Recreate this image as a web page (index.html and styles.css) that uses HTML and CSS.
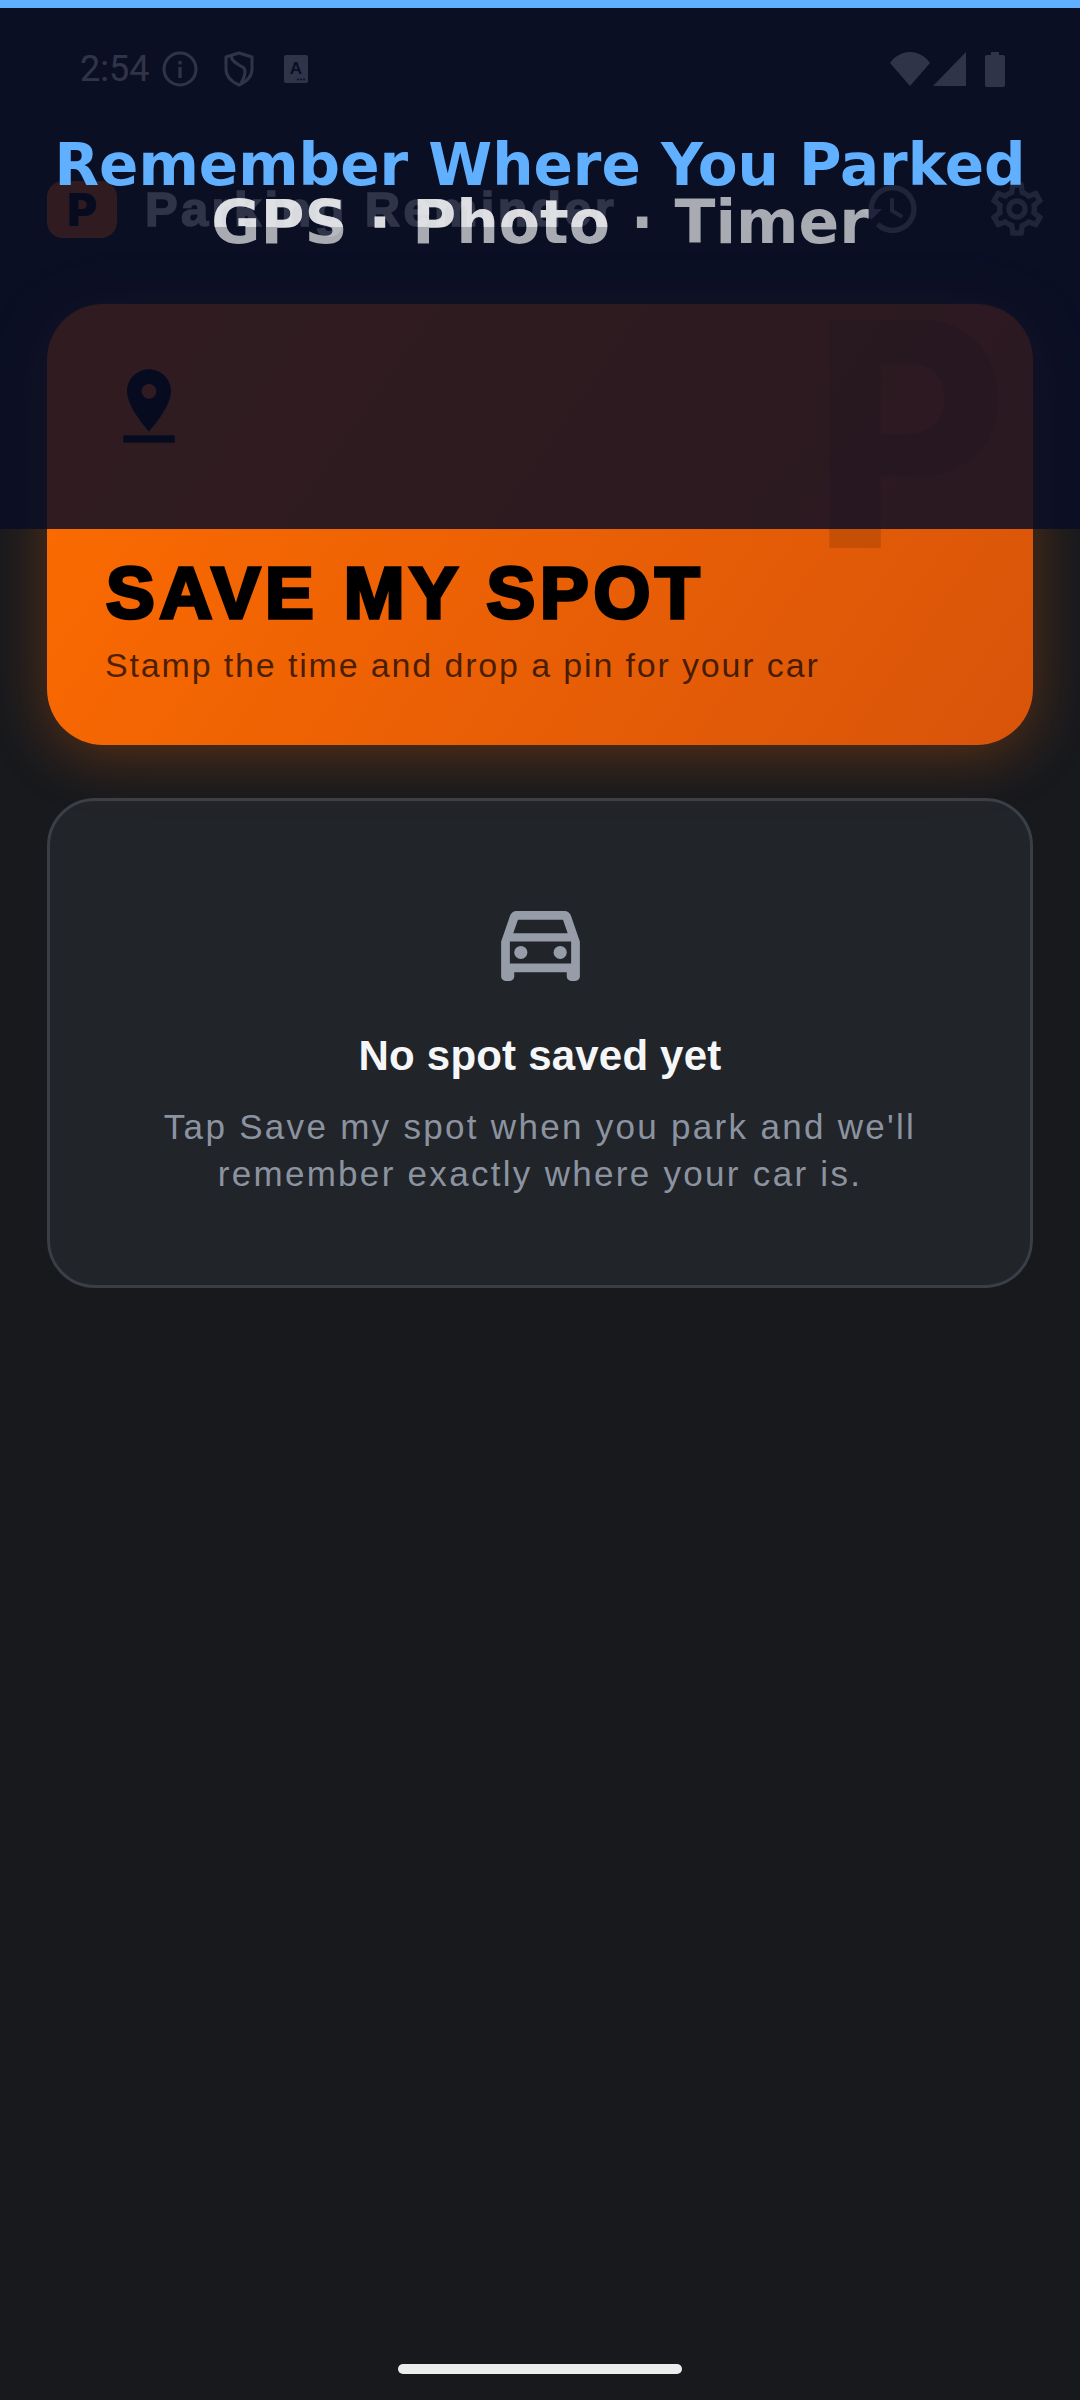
FILE: index.html
```html
<!DOCTYPE html>
<html lang="en">
<head>
    <meta charset="UTF-8" />
    <title>Parking Reminder</title>
    <link rel="stylesheet" href="styles.css">
</head>
<body>
    <div class="status-bar">
        <span class="clock">2:54</span>
        <svg class="st-info" viewBox="0 0 36 36"><circle cx="18" cy="18" r="16" fill="none" stroke="#fff" stroke-width="3"/><rect x="16.4" y="16" width="3.2" height="11" fill="#fff"/><rect x="16.4" y="10" width="3.2" height="3.4" fill="#fff"/></svg>
        <svg class="st-shield" viewBox="0 0 30 36"><path d="M15 2 L28 6 V18 C28 26 22 31 15 34 C8 31 2 26 2 18 V6 Z" fill="none" stroke="#fff" stroke-width="3" stroke-linejoin="round"/><path d="M7 5 C8 12 16 14 20 17 C22 20 21 26 17 32" fill="none" stroke="#fff" stroke-width="3"/></svg>
        <svg class="st-font" viewBox="0 0 24 28"><rect width="24" height="28" rx="2" fill="#fff"/><text x="12" y="19" class="st-font-a">A</text><circle cx="14" cy="24.5" r="1" fill="#17191d"/><circle cx="17" cy="24.5" r="1" fill="#17191d"/><circle cx="20" cy="24.5" r="1" fill="#17191d"/></svg>
        <span class="spacer"></span>
        <svg class="st-wifi" viewBox="0 0 40 34"><path d="M20 34 L0 11 C5 4 12 0 20 0 C28 0 35 4 40 11 Z" fill="#fff"/></svg>
        <svg class="st-signal" viewBox="0 0 33 34"><polygon points="33,0 33,34 0,34" fill="#fff"/></svg>
        <svg class="st-battery" viewBox="0 0 20 35"><rect y="3" width="20" height="32" rx="2" fill="#fff"/><rect x="6" width="8" height="4" fill="#fff"/></svg>
    </div>

    <div class="app-bar">
        <div class="logo">P</div>
        <div class="app-title">Parking Reminder</div>
        <span class="spacer"></span>
        <svg class="bar-icon" viewBox="0 0 24 24"><path d="M13 3c-4.97 0-9 4.03-9 9H1l3.89 3.89.07.14L9 12H6c0-3.87 3.13-7 7-7s7 3.13 7 7-3.13 7-7 7c-1.93 0-3.68-.79-4.94-2.06l-1.42 1.42C8.27 19.99 10.51 21 13 21c4.97 0 9-4.03 9-9s-4.03-9-9-9zm-1 5v5l4.28 2.54.72-1.21-3.5-2.08V8H12z"/></svg>
        <svg class="bar-icon" viewBox="0 0 24 24"><path d="M19.43 12.98c.04-.32.07-.64.07-.98 0-.34-.03-.66-.07-.98l2.11-1.65c.19-.15.24-.42.12-.64l-2-3.46c-.09-.16-.26-.25-.44-.25-.06 0-.12.01-.17.03l-2.49 1c-.52-.4-1.08-.73-1.69-.98l-.38-2.65C14.46 2.18 14.25 2 14 2h-4c-.25 0-.46.18-.49.42l-.38 2.65c-.61.25-1.17.59-1.69.98l-2.49-1c-.06-.02-.12-.03-.18-.03-.17 0-.34.09-.43.25l-2 3.46c-.13.22-.07.49.12.64l2.11 1.65c-.04.32-.07.65-.07.98 0 .33.03.66.07.98l-2.11 1.65c-.19.15-.24.42-.12.64l2 3.46c.09.16.26.25.44.25.06 0 .12-.01.17-.03l2.49-1c.52.4 1.08.73 1.69.98l.38 2.65c.03.24.24.42.49.42h4c.25 0 .46-.18.49-.42l.38-2.65c.61-.25 1.17-.59 1.69-.98l2.49 1c.06.02.12.03.18.03.17 0 .34-.09.43-.25l2-3.46c.12-.22.07-.49-.12-.64l-2.11-1.65zm-1.98-1.71c.04.31.05.52.05.73 0 .21-.02.43-.05.73l-.14 1.13.89.7 1.08.84-.7 1.21-1.27-.51-1.04-.42-.9.68c-.43.32-.84.56-1.25.73l-1.06.43-.16 1.13-.2 1.35h-1.4l-.19-1.35-.16-1.13-1.06-.43c-.43-.18-.83-.41-1.23-.71l-.91-.7-1.06.43-1.27.51-.7-1.21 1.08-.84.89-.7-.14-1.13c-.03-.31-.05-.54-.05-.74s.02-.43.05-.73l.14-1.13-.89-.7-1.08-.84.7-1.21 1.27.51 1.04.42.9-.68c.43-.32.84-.56 1.25-.73l1.06-.43.16-1.13.2-1.35h1.39l.19 1.35.16 1.13 1.06.43c.43.18.83.41 1.23.71l.91.7 1.06-.43 1.27-.51.7 1.21-1.07.85-.89.7.14 1.13zM12 8c-2.21 0-4 1.79-4 4s1.79 4 4 4 4-1.79 4-4-1.79-4-4-4zm0 6c-1.1 0-2-.9-2-2s.9-2 2-2 2 .9 2 2-.9 2-2 2z"/></svg>
    </div>

    <main>
        <div class="save-card">
            <div class="save-mark">P</div>
            <svg class="pin" viewBox="0 0 24 24"><path d="M18 8c0-3.31-2.69-6-6-6S6 4.69 6 8c0 4.5 6 11 6 11s6-6.5 6-11zm-8 0c0-1.1.9-2 2-2s2 .9 2 2-.89 2-2 2c-1.1 0-2-.9-2-2zM5 20v2h14v-2H5z"/></svg>
            <h2>SAVE MY SPOT</h2>
            <p>Stamp the time and drop a pin for your car</p>
        </div>

        <div class="empty-card">
            <svg class="car" viewBox="0 0 24 24"><path d="M18.92 6.01C18.72 5.42 18.16 5 17.5 5h-11c-.66 0-1.21.42-1.42 1.01L3 12v8c0 .55.45 1 1 1h1c.55 0 1-.45 1-1v-1h12v1c0 .55.45 1 1 1h1c.55 0 1-.45 1-1v-8l-2.08-5.99zM6.85 7h10.29l1.08 3.11H5.77L6.85 7zM19 17H5v-5h14v5z"/><circle cx="7.5" cy="14.5" r="1.5"/><circle cx="16.5" cy="14.5" r="1.5"/></svg>
            <h3>No spot saved yet</h3>
            <p>Tap Save my spot when you park and we'll<br>remember exactly where your car is.</p>
        </div>
    </main>

    <div class="home-pill"></div>

    <!-- banner sits on top of the app -->
    <div class="banner">
        <div class="banner-title">Remember Where You Parked</div>
        <div class="banner-sub">GPS · Photo · Timer</div>
    </div>
</body>
</html>
```

FILE: styles.css
```css
* {
    margin: 0;
    padding: 0;
    box-sizing: border-box;
}

body {
    position: relative;
    width: 1080px;
    height: 2400px;
    overflow: hidden;
    background-color: #17191d;
    font-family: "Liberation Sans", Arial, sans-serif;
}

.spacer {
    flex: 1;
}

/* status bar */
.status-bar {
    display: flex;
    align-items: center;
    height: 138px;
    padding: 0 75px 0 80px;
}

.clock {
    width: 70px;
    font-family: Roboto, sans-serif;
    font-size: 36px;
    color: #fff;
}

.st-info { width: 36px; height: 36px; margin-left: 12px; }
.st-shield { width: 30px; height: 36px; margin-left: 26px; }
.st-font { width: 24px; height: 28px; margin-left: 30px; }
.st-wifi { width: 40px; height: 34px; }
.st-signal { width: 33px; height: 34px; margin-left: 3px; }
.st-battery { width: 20px; height: 35px; margin-left: 19px; }

.st-font-a {
    font-family: "Liberation Sans", sans-serif;
    font-size: 17px;
    font-weight: bold;
    text-anchor: middle;
    fill: #17191d;
}

/* top app bar */
.app-bar {
    display: flex;
    align-items: center;
    height: 142px;
    padding: 0 31px 0 47px;
}

.logo {
    display: flex;
    justify-content: center;
    align-items: center;
    width: 70px;
    height: 57px;
    border-radius: 16px;
    background-color: #ff6d00;
    color: #000;
    font-family: Inter, sans-serif;
    font-size: 46px;
    font-weight: 900;
}

.app-title {
    margin-left: 28px;
    font-size: 49px;
    font-weight: bold;
    letter-spacing: 3.3px;
    color: #fff;
    -webkit-text-stroke: 1.5px #fff;
}

.bar-icon {
    width: 64px;
    height: 64px;
    fill: #9aa0aa;
}

.bar-icon + .bar-icon {
    margin-left: 63px;
}

/* cards */
main {
    display: flex;
    flex-direction: column;
    gap: 53px;
    padding: 24px 47px 0;
}

.save-card {
    position: relative;
    height: 441px;
    padding: 58px;
    border-radius: 56px;
    background: linear-gradient(125deg, #ff6d00, #d8540a);
    box-shadow: 0 10px 60px rgba(255, 109, 0, 0.3);
}

.save-mark {
    position: absolute;
    top: -58px;
    right: 25px;
    font-family: Inter, sans-serif;
    font-size: 314px;
    font-weight: 800;
    line-height: 1.2;
    color: rgba(0, 0, 0, 0.12);
    transform: scaleX(0.955);
    transform-origin: right;
}

.pin {
    display: block;
    width: 88px;
    height: 88px;
    fill: #000;
}

.save-card h2 {
    margin-top: 103px;
    margin-left: 1px;
    font-size: 73px;
    line-height: 80px;
    letter-spacing: 4.8px;
    color: #000;
    -webkit-text-stroke: 3.5px #000;
}

.save-card p {
    position: relative;
    margin-top: 10px;
    font-size: 34px;
    line-height: 44px;
    letter-spacing: 1.85px;
    color: rgba(0, 0, 0, 0.7);
}

.empty-card {
    padding: 88px 40px 88px;
    border: 3px solid #3a3f47;
    border-radius: 48px;
    background-color: #212429;
    text-align: center;
}

.car {
    display: block;
    width: 105px;
    height: 105px;
    margin: 0 auto;
    fill: #969ca8;
}

.empty-card h3 {
    margin-top: 36px;
    font-size: 42px;
    line-height: 52px;
    letter-spacing: 0.2px;
    color: #f5f6f8;
}

.empty-card p {
    margin-top: 21px;
    font-size: 35px;
    line-height: 47px;
    letter-spacing: 2.3px;
    color: #8c93a0;
}

.home-pill {
    position: absolute;
    left: 398px;
    bottom: 26px;
    width: 284px;
    height: 10px;
    border-radius: 5px;
    background-color: #ececec;
}

/* banner over the app */
.banner {
    position: absolute;
    top: 0;
    left: 0;
    right: 0;
    height: 529px;
    padding-top: 129px;
    border-top: 8px solid #60b0ff;
    background-color: rgba(8, 13, 38, 0.84);
    font-family: "DejaVu Sans", sans-serif;
    font-weight: bold;
    font-size: 58px;
    line-height: 57px;
    text-align: center;
}

.banner-title {
    color: #60b0ff;
}

/* part of the line is brighter where it crosses the app title */
.banner-sub {
    width: fit-content;
    margin: 0 auto;
    font-size: 60px;
    color: transparent;
    background:
        linear-gradient(rgba(255, 255, 255, 0.57), rgba(255, 255, 255, 0.57)) no-repeat 0 0 / 397px 33px,
        linear-gradient(rgba(255, 255, 255, 0.65), rgba(255, 255, 255, 0.65));
    -webkit-background-clip: text;
    background-clip: text;
}
```
